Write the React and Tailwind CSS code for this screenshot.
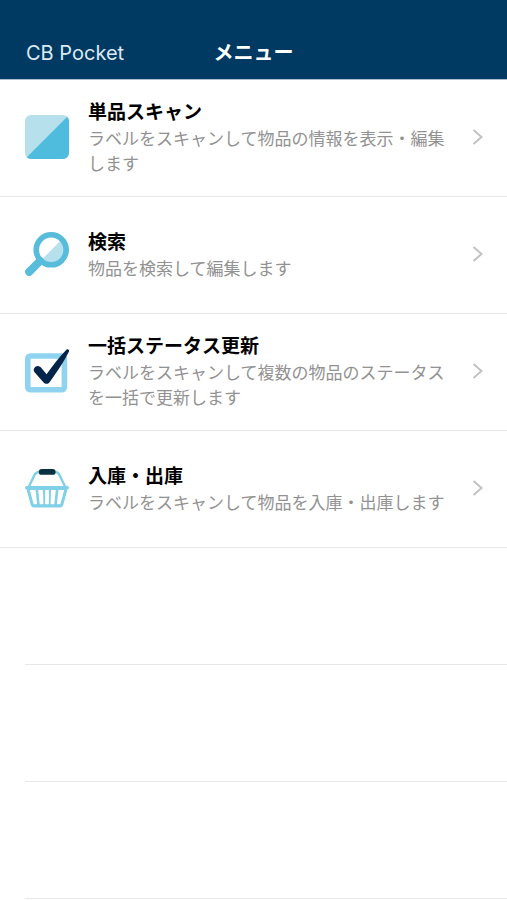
import React from "react";

function ScanIcon() {
  return (
    <svg viewBox="0 0 44 44" className="w-11 h-11" aria-hidden="true">
      <rect width="44" height="44" rx="6" fill="#b7e0ed" />
      <path d="M42.2 1.8 1.8 42.2A6 6 0 0 0 6 44H38A6 6 0 0 0 44 38V6A6 6 0 0 0 42.2 1.8Z" fill="#50bcdd" />
    </svg>
  );
}

function SearchIcon() {
  return (
    <svg viewBox="0 0 44 44" className="w-11 h-11" aria-hidden="true">
      <path d="M36 8.3A13.4 13.4 0 0 1 17 27.3Z" fill="#b7e0ed" />
      <circle cx="26.2" cy="17.8" r="15" fill="none" stroke="#57bddb" strokeWidth="5.6" />
      <path d="M15 29 4.2 39.8" stroke="#57bddb" strokeWidth="8" strokeLinecap="round" />
    </svg>
  );
}

function CheckIcon() {
  return (
    <svg viewBox="0 0 44 44" className="w-11 h-11" aria-hidden="true">
      <rect x="2.8" y="7" width="36.6" height="33.8" rx="2.5" fill="none" stroke="#8fd3f0" strokeWidth="5.6" />
      <path
        d="M10.2 17.9C12.2 16.2 14.6 16.8 16.2 18.8L21.6 25.2C28 16.5 34 8 41.4.7C42.8-.4 44.8 1 44 2.6C38.5 13.5 31 24.6 24.4 33.4C23 35.2 20 35.2 18.6 33.4L9.8 23.6C8.2 21.8 8.5 19.4 10.2 17.9Z"
        fill="#04244a"
      />
    </svg>
  );
}

function BasketIcon() {
  return (
    <svg viewBox="0 0 44 44" className="w-11 h-11" aria-hidden="true">
      <path
        d="M3.5 21.5 9.5 9Q11 6 14 6H30Q33 6 34.5 9L40.5 21.5"
        fill="none"
        stroke="#80d0e8"
        strokeWidth="2.4"
      />
      <path
        d="M2 20H42Q44 20 44 21.8Q44 23.2 42.4 23.6L38.4 38.6Q37.6 41.5 35 41.5H9Q6.4 41.5 5.6 38.6L1.6 23.6Q0 23.2 0 21.8Q0 20 2 20Z"
        fill="#80d0e8"
      />
      <path
        d="M4.8 24H10.6L12 37.4Q12 38.2 11.2 38.2H9.6Q8.7 38.2 8.4 37.2ZM13.2 24H18L18.4 37.4Q18.4 38.2 17.6 38.2H15.6Q14.7 38.2 14.6 37.4ZM20.1 24H23.9V37.4Q23.9 38.2 23.1 38.2H20.9Q20.1 38.2 20.1 37.4ZM26 24H30.8L29.4 37.4Q29.3 38.2 28.4 38.2H26.4Q25.6 38.2 25.6 37.4ZM33.4 24H39.2L35.6 37.2Q35.3 38.2 34.4 38.2H32.8Q32 38.2 32 37.4Z"
        fill="#fff"
      />
      <rect x="13.8" y="3" width="16.8" height="5.8" rx="2.9" fill="#08303f" />
    </svg>
  );
}

const menus = [
  { title: "単品スキャン", text: "ラベルをスキャンして物品の情報を表示・編集します", Icon: ScanIcon },
  { title: "検索", text: "物品を検索して編集します", Icon: SearchIcon },
  { title: "一括ステータス更新", text: "ラベルをスキャンして複数の物品のステータスを一括で更新します", Icon: CheckIcon },
  { title: "入庫・出庫", text: "ラベルをスキャンして物品を入庫・出庫します", Icon: BasketIcon },
];

export default function App() {
  return (
    <div className="min-h-screen bg-white font-['Inter','Noto_Sans_CJK_JP',sans-serif]">
      <header className="h-20 pt-[26px] px-6 grid grid-cols-3 items-center bg-[#003961] border-b border-[#a9bdcc] text-white text-xl">
        <button type="button" className="justify-self-start px-0.5 whitespace-nowrap text-[#dce9f3]">
          CB Pocket
        </button>
        <h1 className="text-center font-bold">メニュー</h1>
      </header>

      <main>
        <ul>
          {menus.map(({ title, text, Icon }) => (
            <li key={title} className="border-b border-[#e8e8e8]">
              <a href="#" className="min-h-[116px] pl-[25px] pr-6 pb-0.5 flex items-center">
                <Icon />
                <div className="flex-1 ml-[19px] mr-5 pt-0.5">
                  <h2 className="text-[19px] leading-7 font-bold text-black">{title}</h2>
                  <p className="text-[17px] leading-[25px] text-[#929292]">{text}</p>
                </div>
                <svg viewBox="0 0 11 16" className="w-[11px] h-4" aria-hidden="true">
                  <path d="M1.5 1 9.5 8 1.5 15" fill="none" stroke="#c2c2c2" strokeWidth="2" />
                </svg>
              </a>
            </li>
          ))}
        </ul>

        {/* empty rows */}
        <div className="ml-[25px]">
          <div className="h-[117px] border-b border-[#e8e8e8]" />
          <div className="h-[117px] border-b border-[#e8e8e8]" />
          <div className="h-[117px] border-b border-[#e8e8e8]" />
        </div>
      </main>
    </div>
  );
}
